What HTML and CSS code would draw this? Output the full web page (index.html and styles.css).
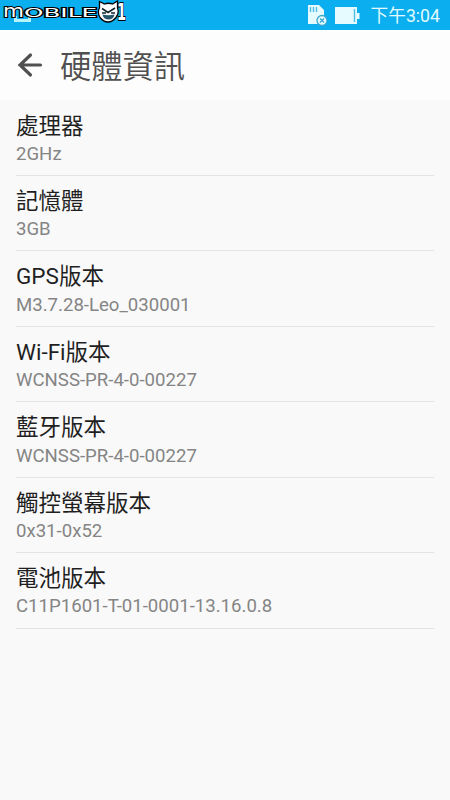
FILE: index.html
```html
<!DOCTYPE html>
<html lang="zh-Hant">
<head>
    <meta charset="UTF-8">
    <meta name="viewport" content="width=device-width, initial-scale=1.0">
    <title>硬體資訊</title>
    <link rel="stylesheet" href="styles.css">
</head>
<body>

    <div class="status-bar">
        <svg class="logo" viewBox="0 0 140 30" width="140" height="30">
            <path class="notice" d="M15.500 16v4.500h14v-4.500"/>
            <g class="logo-text">
                <text x="3" y="17" font-size="17" textLength="21" lengthAdjust="spacingAndGlyphs">m</text>
                <text x="24" y="17" font-size="13" textLength="73" lengthAdjust="spacingAndGlyphs">OBILE</text>
                <text class="one" x="117" y="20" font-size="23" textLength="9" lengthAdjust="spacingAndGlyphs">1</text>
            </g>
            <path class="face" d="M99.500 1.500l5 2.500q4-1.500 8 0l5-3 0 7q2 5-1.500 9.500-3.500 4.500-8 4.500t-8-4.500q-3-5.500-.5-9.500z"/>
            <path class="face-line" d="M102 8.500l6 4 7-4.500M102 13h4M111 13h4"/>
            <path class="mouth" d="M102.500 14.500q6 1.500 12 0-1 5-6 5t-6-5z"/>
        </svg>
        <div class="status-icons">
            <svg viewBox="0 0 20 22" width="20" height="22">
                <path class="fill" d="M1 0h11l5 5v14H1z"/>
                <path class="cut" d="M3.500 2v5M6.500 2v5M9.500 2v5"/>
                <circle class="badge" cx="15" cy="15.500" r="5"/>
                <path class="badge" d="M13 13.500l4 4m0-4l-4 4"/>
            </svg>
            <svg viewBox="0 0 26 18" width="26" height="18">
                <path class="fill" d="M0 0h22v17H0zM22 6h2.500v6h-2.500z"/>
                <path class="cut" d="M19.500 2v13"/>
            </svg>
            <span class="clock">下午3:04</span>
        </div>
    </div>

    <header class="header">
        <svg class="back" viewBox="0 0 26 26" width="26" height="26">
            <path d="M13.500 3L3 13l10.500 10M3 13H23.500"/>
        </svg>
        <h1>硬體資訊</h1>
    </header>

    <ul class="list">
        <li><h2>處理器</h2><p>2GHz</p></li>
        <li><h2>記憶體</h2><p>3GB</p></li>
        <li><h2>GPS版本</h2><p>M3.7.28-Leo_030001</p></li>
        <li><h2>Wi-Fi版本</h2><p>WCNSS-PR-4-0-00227</p></li>
        <li><h2>藍牙版本</h2><p>WCNSS-PR-4-0-00227</p></li>
        <li><h2>觸控螢幕版本</h2><p>0x31-0x52</p></li>
        <li><h2>電池版本</h2><p>C11P1601-T-01-0001-13.16.0.8</p></li>
    </ul>

</body>
</html>
```
FILE: styles.css
```css
body {
    margin: 0;
    min-height: 100vh;
    background-color: #f9f9f9;
    font-family: Roboto, "Noto Sans CJK TC", sans-serif;
}

h1, h2, p, ul {
    margin: 0;
    padding: 0;
    font-weight: normal;
}

svg {
    display: block;
    fill: none;
}

.status-bar {
    height: 30px;
    background-color: #0baeee;
    display: flex;
    justify-content: space-between;
}

.logo-text text {
    font-family: "DejaVu Sans", sans-serif;
    fill: #fff;
    stroke: #000;
    stroke-width: 2px;
    paint-order: stroke;
}

.logo-text .one {
    font-weight: bold;
}

.notice {
    stroke: #b5f3ff;
    stroke-width: 3px;
}

.face {
    fill: #fff;
    stroke: #000;
    stroke-width: 1.3px;
}

.face-line {
    stroke: #10242c;
    stroke-width: 1.6px;
}

.mouth {
    fill: #27566b;
}

.status-icons {
    display: flex;
    align-items: center;
    padding: 2px 10px 0 0;
}

.status-icons svg {
    margin-right: 8px;
}

.fill {
    fill: #e6fbff;
}

.cut {
    stroke: #4dbde8;
    stroke-width: 1.4px;
}

.badge {
    fill: #e6fbff;
    stroke: #3aa9d2;
    stroke-width: 1.3px;
}

.clock {
    margin-left: 2px;
    color: #e0faff;
    font-size: 17.7px;
    line-height: 29px;
}

.header {
    height: 70px;
    background-color: #fdfdfd;
    display: flex;
    align-items: center;
}

.back {
    margin: 0 17px 0 17px;
    stroke: #505050;
    stroke-width: 3.2px;
    stroke-linecap: round;
}

.header h1 {
    padding-top: 5px;
    color: #505050;
    font-size: 31.25px;
    font-weight: 350;
    line-height: 46px;
}

.list {
    list-style: none;
    margin: 0 16px;
    padding-top: 0.5px;
}

.list li {
    box-sizing: border-box;
    height: 75.45px;
    padding-top: 10px;
    border-bottom: 1px solid #e3e3e3;
}

.list h2 {
    color: #1f1f1f;
    font-size: 22.5px;
    line-height: 30px;
}

.list p {
    padding-top: 0.3px;
    color: #858585;
    font-size: 18.6px;
    line-height: 26px;
}
```
